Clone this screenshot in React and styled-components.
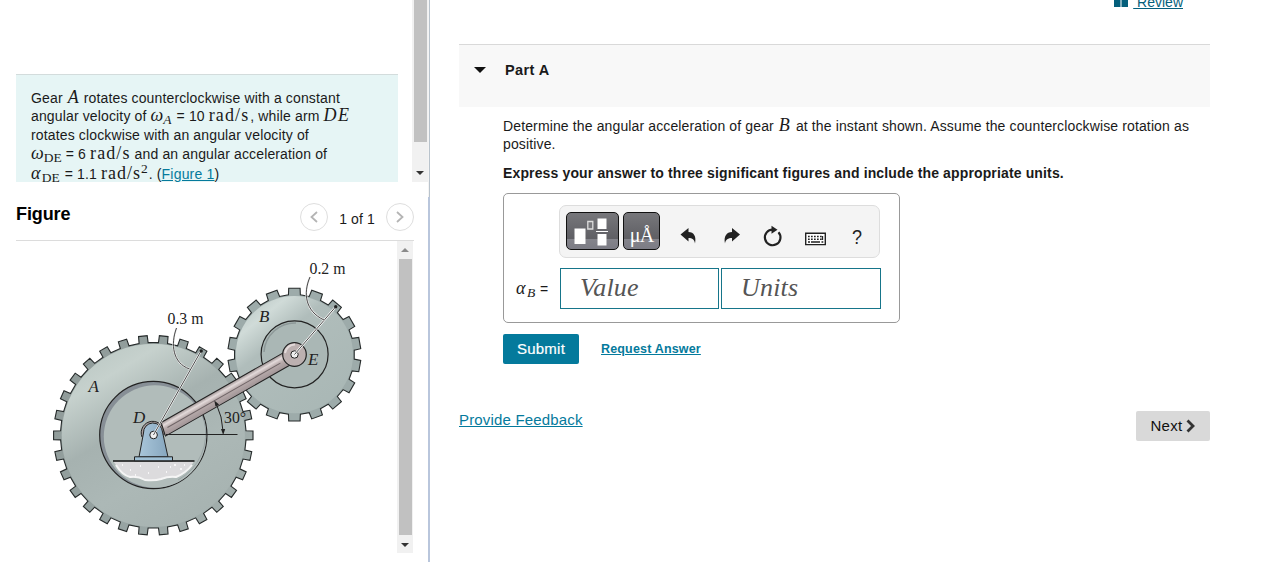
import React from 'react';
import styled, { createGlobalStyle } from 'styled-components';

const GlobalStyle = createGlobalStyle`
    * { box-sizing: border-box; }
    body {
        margin: 0;
        background: #fff;
        color: #1a1a1a;
        font-family: "Liberation Sans", Arial, sans-serif;
        font-size: 14px;
        overflow: hidden;
    }
`;

const Page = styled.div`
    display: flex;
    width: 1264px;
    height: 562px;
    overflow: hidden;
`;

const LeftPane = styled.div`
    display: flex;
    flex-direction: column;
    width: 428px;
    flex: none;
`;

const Divider = styled.div`
    display: flex;
    flex-direction: column;
    width: 2px;
    flex: none;
    background: #b9c6dc;
    &::before {
        content: '';
        height: 197px;
        border-left: 1px solid #f4f4f4;
        background: #b9c3cc;
    }
`;

const Top = styled.div`
    display: flex;
    justify-content: space-between;
    height: 182px;
    padding-left: 16px;
`;

const Problem = styled.div`
    width: 382px;
    height: 108px;
    margin-top: 74px;
    padding: 14px 0 0 15px;
    border-top: 1px solid #d3dcdc;
    background: #e6f5f5;
    overflow: hidden;
`;

const Line = styled.div`
    height: ${props => props.h || 18}px;
    line-height: ${props => props.h || 18}px;
    letter-spacing: ${props => props.ls || 0.14}px;
    font-weight: ${props => (props.bold ? 700 : 400)};
    white-space: pre;
`;

const Maths = styled.span`
    margin: 0 ${props => (props.gap === undefined ? 1 : props.gap)}px 0 ${props => props.lead || 0}px;
    font-family: "Liberation Serif", "Times New Roman", serif;
    font-size: ${props => props.size || 18}px;
    font-style: ${props => (props.upright ? 'normal' : 'italic')};
    letter-spacing: ${props => props.ls || 0}px;
    line-height: 1px;
    sub, sup {
        font-size: 13.5px;
        line-height: 1px;
        letter-spacing: 0;
    }
    sub { vertical-align: -3px; }
    sup { vertical-align: 6px; }
    b { font-weight: 400; font-style: normal; }
`;

const Link = styled.a`
    color: #047a9c;
    font-size: ${props => props.size || 14}px;
    font-weight: ${props => (props.bold ? 700 : 400)};
    letter-spacing: ${props => props.ls || 0}px;
    text-decoration: underline;
    white-space: pre;
`;

const ScrollTrack = styled.div`
    display: flex;
    flex-direction: column;
    align-items: center;
    justify-content: space-between;
    width: 16px;
    background: #f1f1f1;
`;

const Thumb = styled.div`
    width: 13px;
    height: ${props => props.h}px;
    background: #c1c1c1;
`;

const ScrollArrow = styled.div`
    display: flex;
    align-items: center;
    justify-content: center;
    height: ${props => props.h}px;
    &::before {
        content: '';
        border: 4px solid transparent;
        border-${props => (props.up ? 'top' : 'bottom')}-width: 0;
        border-${props => (props.up ? 'bottom' : 'top')}-color: ${props => (props.up ? '#8b8b8b' : '#333')};
    }
`;

const FigureHead = styled.div`
    display: flex;
    align-items: center;
    height: 59px;
    width: 398px;
    margin-left: 16px;
    border-bottom: 1px solid #dcdcdc;
`;

const FigureTitle = styled.h2`
    flex: 1;
    margin: 0;
    padding-top: 5px;
    font-size: 18px;
    line-height: 20px;
    letter-spacing: -0.1px;
    color: #000;
`;

const Pager = styled.div`
    display: flex;
    align-items: center;
    padding-top: 12px;
    font-size: 14px;
`;

const Count = styled.span`
    width: 58px;
    text-align: center;
    padding-top: 3px;
    letter-spacing: 0.1px;
`;

const RoundButton = styled.button`
    display: flex;
    align-items: center;
    justify-content: center;
    width: 28px;
    height: 28px;
    padding: 0;
    border: 1px solid #dedede;
    border-radius: 50%;
    background: #fff;
`;

const FigureBody = styled.div`
    display: flex;
    height: 312px;
    width: 398px;
    margin-left: 16px;
    svg { display: block; }
`;

const RightPane = styled.div`
    display: flex;
    flex-direction: column;
    width: 751px;
    margin-left: 29px;
`;

const Review = styled.div`
    display: flex;
    justify-content: flex-end;
    height: 44px;
    padding-right: 27px;
    color: #045f7b;
    svg { margin-top: -5px; margin-right: 5px; }
    a { margin-top: -6px; height: 16px; line-height: 16px; color: #045f7b; }
`;

const PartHeader = styled.div`
    display: flex;
    align-items: center;
    height: 63px;
    padding: 0 0 12px 15px;
    border-top: 1px solid #d9d9d9;
    background: #f8f8f8;
    font-size: 14.5px;
    font-weight: 700;
    letter-spacing: 0.4px;
`;

const Caret = styled.span`
    margin-right: 19px;
    border: 6px solid transparent;
    border-top-color: #111;
    border-bottom-width: 0;
`;

const PartBody = styled.div`
    padding: 10px 0 0 44px;
`;

const AnswerBox = styled.div`
    width: 397px;
    height: 130px;
    padding: 11px 0 0 12px;
    border: 1px solid #999;
    border-radius: 5px;
`;

const Toolbar = styled.div`
    display: flex;
    align-items: center;
    width: 321px;
    height: 53px;
    margin-left: 43px;
    padding-left: 6px;
    border: 1px solid #ddd;
    border-radius: 7px;
    background: #f4f4f4;
`;

const DarkButton = styled.button`
    width: ${props => props.w}px;
    height: 38px;
    margin: 0 4px 2px 0;
    padding: 0;
    border: 1px solid #111;
    border-radius: 5px;
    background: linear-gradient(#77777b 0, #5f5f64 72%, #84848b 73%, #7c7c85 100%);
    color: #fff;
    font: 20px/45px "Liberation Serif", serif;
    letter-spacing: -0.8px;
    overflow: hidden;
    svg { display: block; }
`;

const Tools = styled.div`
    display: flex;
    align-items: center;
    padding-top: 10px;
    svg { display: block; }
`;

const AnswerRow = styled.div`
    display: flex;
    align-items: center;
    height: 41px;
    margin-top: 10px;
`;

const AnswerLabel = styled.div`
    width: 44px;
    padding-top: 1px;
    white-space: pre;
`;

const Field = styled.div`
    width: ${props => props.w}px;
    height: 41px;
    margin-right: 2px;
    padding-left: 19px;
    border: 1px solid #16758a;
    background: #fff;
    color: #555;
    font: italic 26px/38px "Liberation Serif", "Times New Roman", serif;
    letter-spacing: 0.2px;
`;

const Actions = styled.div`
    display: flex;
    align-items: center;
    gap: 22px;
    margin-top: 11px;
`;

const Submit = styled.button`
    width: 76px;
    height: 30px;
    padding: 0;
    border: 0;
    border-radius: 2px;
    background: #047a9c;
    color: #fff;
    font: 15px/28px "Liberation Sans", Arial, sans-serif;
    letter-spacing: 0.25px;
    -webkit-text-stroke: 0.2px #fff;
`;

const Footer = styled.div`
    display: flex;
    align-items: flex-start;
    justify-content: space-between;
    margin-top: 47px;
`;

const NextButton = styled.button`
    display: flex;
    align-items: center;
    justify-content: center;
    gap: 3px;
    width: 74px;
    height: 30px;
    padding: 0 0 1px;
    border: 0;
    border-radius: 2px;
    background: #d9d9d9;
    color: #111;
    font: 15px "Liberation Sans", Arial, sans-serif;
    letter-spacing: 0.3px;
`;

// outline of a gear with n square teeth, first tooth at angle `start`
function gearPath(cx, cy, outer, root, n, start, halfTip, halfRoot) {
    const pt = (r, deg) => {
        const a = (deg * Math.PI) / 180;
        return `${(cx + r * Math.cos(a)).toFixed(2)} ${(cy + r * Math.sin(a)).toFixed(2)}`;
    };
    const parts = [];
    for (let i = 0; i < n; i++) {
        const a = start + (360 / n) * i;
        parts.push(pt(root, a - halfRoot), pt(outer, a - halfTip), pt(outer, a + halfTip), pt(root, a + halfRoot));
    }
    return `M${parts.join('L')}Z`;
}

function GearFigure() {
    return (
        <svg width="381" height="312" viewBox="16 241 381 312" fontFamily="Liberation Serif, serif" fill="#222">
            <defs>
                <linearGradient id="ga" x1="0" y1="0.1" x2="1" y2="0.7">
                    <stop offset="0" stopColor="#8f9a98" />
                    <stop offset="0.6" stopColor="#96a3a2" />
                    <stop offset="1" stopColor="#a3afad" />
                </linearGradient>
                <linearGradient id="gaFace" x1="0.1" y1="0" x2="0.7" y2="1">
                    <stop offset="0" stopColor="#b8c5c1" />
                    <stop offset="0.2" stopColor="#c6d1cd" />
                    <stop offset="0.45" stopColor="#a6b2b0" />
                    <stop offset="0.7" stopColor="#acb8b6" />
                    <stop offset="1" stopColor="#a7b3b1" />
                </linearGradient>
                <linearGradient id="gb" x1="0" y1="0" x2="0.8" y2="1">
                    <stop offset="0" stopColor="#b0bdbb" />
                    <stop offset="0.22" stopColor="#d0dbd8" />
                    <stop offset="0.4" stopColor="#b0bdbb" />
                    <stop offset="1" stopColor="#a9b7b5" />
                </linearGradient>
                <linearGradient id="arm" x1="0" y1="0" x2="0" y2="1">
                    <stop offset="0" stopColor="#9d9292" />
                    <stop offset="0.25" stopColor="#e3dada" />
                    <stop offset="0.5" stopColor="#b9acac" />
                    <stop offset="1" stopColor="#a09496" />
                </linearGradient>
                <linearGradient id="post" x1="0" y1="0" x2="1" y2="0">
                    <stop offset="0" stopColor="#a9c6da" />
                    <stop offset="1" stopColor="#86a6be" />
                </linearGradient>
            </defs>

            <path d={gearPath(153.3, 435.3, 99.8, 92.8, 30, 0, 2.5, 2.8)} fill="url(#ga)" stroke="#262b2b" strokeWidth="1.1" />
            <circle cx="153.3" cy="435.3" r="91.6" fill="url(#gaFace)" />
            <circle cx="153.3" cy="435" r="53.6" fill="#878f96" stroke="#222" strokeWidth="1.2" />
            <circle cx="155" cy="436.5" r="51.2" fill="#b1bcba" />
            <path d="M204 420a53 53 0 0 1-26 60" fill="none" stroke="#9aa5a5" strokeWidth="1" />

            <path d={gearPath(294.4, 354.6, 66.6, 60, 18, 10, 4.9, 5.7)} fill="#9dabaa" stroke="#262b2b" strokeWidth="1.1" />
            <circle cx="294.4" cy="354.6" r="58.6" fill="url(#gb)" />
            <circle cx="294.6" cy="354.3" r="33.5" fill="#aab7b5" stroke="#222" strokeWidth="1.2" />
            <path d="M264 352a31 31 0 0 1 32-29" fill="none" stroke="#8d9898" strokeWidth="1.5" />

            <path d="M113.500 461.500h80.500q-7 12-17 16q-9-1-14 1.500q-10 3-18 1q-7-4-14-2q-11-5-17.500-16.500z" fill="#dcdbdd" />
            <path d="M116 465q6 10 14 12q8-1 15 3q10 1 16-1q8-3 15-2q10-4 16-12" fill="none" stroke="#f5f5f5" strokeWidth="2" />
            <path d="M122 465h1M130 470h1M140 466h1M148 473h1M158 467h1M166 472h1M174 465h2M180 469h2M170 467h1M135 475h1M184 465h1" stroke="#fff" strokeWidth="1.5" />
            <path d="M113 461h81.500" stroke="#111" strokeWidth="1.3" />
            <path d="M142 437a11.500 11.500 0 1 1 22-2" fill="#a99f9f" stroke="#222" strokeWidth="1" />
            <g transform="translate(153.300 435) rotate(-29.700)">
                <path d="M13-7H153V7H10z" fill="url(#arm)" stroke="#222" strokeWidth="1" />
                <path d="M16 0.500H146" stroke="#6d6365" strokeWidth="0.900" />
            </g>
            <path d="M139 457l4.500-24a9.500 9.500 0 0 1 19-1l5.500 25z" fill="url(#post)" stroke="#222" strokeWidth="1" />
            <path d="M134.500 456.800h38v4h-38z" fill="#9fc0d6" stroke="#222" strokeWidth="1" />
            <circle cx="153.600" cy="435" r="3.800" fill="#eee" stroke="#222" />

            <circle cx="294.500" cy="354.500" r="11.800" fill="#bcb0b0" stroke="#222" strokeWidth="1.200" />
            <path d="M285 353a10 10 0 0 1 10-8.500" fill="none" stroke="#e3dada" strokeWidth="2" />
            <circle cx="294.500" cy="354.500" r="3.700" fill="#eee" stroke="#222" />

            <path d="M294.500 354.500L335.500 307M153.500 435L201 351" stroke="#fff" strokeWidth="2" />
            <path d="M294.500 354.500L335.500 307M153.500 435L201 351" stroke="#333" strokeWidth="0.900" />
            <path d="M310 277c-7 16-5 34 14 43M176.500 328c-6 16-4 35 13 41" fill="none" stroke="#eee" strokeWidth="2" />
            <path d="M310 277c-7 16-5 34 14 43M176.500 328c-6 16-4 35 13 41" fill="none" stroke="#333" strokeWidth="0.900" />
            <circle cx="335.700" cy="306.800" r="1.700" />
            <circle cx="201.200" cy="351" r="1.700" />

            <path d="M166 434.500h71.500M216 403q6.500 14 7 28" fill="none" stroke="#222" strokeWidth="1" />
            <path d="M214.300 400.500l1.200 6 3.600-2zM223.200 435l-2.200-6h4.200z" />

            <text x="167.500" y="324" fontSize="15.800">0.3 m</text>
            <text x="309.500" y="273.500" fontSize="15.800">0.2 m</text>
            <text x="224" y="423" fontSize="15.800">30°</text>
            <g fontSize="17" fontStyle="italic">
                <text x="88.500" y="391.500">A</text>
                <text x="133" y="422.500">D</text>
                <text x="259" y="322">B</text>
                <text x="308" y="364.500">E</text>
            </g>
        </svg>
    );
}

function Chevron({ flip }) {
    return (
        <svg width="10" height="14" viewBox="0 0 10 14" fill="none" stroke="#b4b4b4" strokeWidth="1.8">
            <path d={flip ? 'M2 2l5.500 5L2 12' : 'M8 2L2.500 7 8 12'} />
        </svg>
    );
}

function TemplateIcon() {
    return (
        <svg width="51" height="36" viewBox="0 0 51 36">
            <path d="M7.500 15.500h11v15.500h-11zM30.500 5.500h9v10.500h-9zM30.500 21h9v11.500h-9z" fill="#fff" />
            <path d="M29 18.500h12" stroke="#fff" strokeWidth="1" />
            <path d="M20.800 8.500h5v7.500h-5z" fill="#77777b" stroke="#ddd" strokeWidth="1.300" />
        </svg>
    );
}

function ToolIcons() {
    return (
        <svg width="200" height="36" viewBox="664 219 200 36" fill="#222">
            <path d="M680.500 234.500L688.500 228v4c5.500 0 8 4.500 6.500 11.500-.6-4-2.700-5.500-6.500-5.500v3.500z" />
            <path d="M740 234.500L732 228v4c-5.500 0-8.500 4.500-7 11.500.6-4 3.200-5.500 7-5.500v3.500z" />
            <path d="M778.500 232.200a7.800 7.800 0 1 1-5.500-2.600" fill="none" stroke="#222" strokeWidth="2.200" />
            <path d="M771.500 225.800l6 4-6 4z" />
            <path d="M805.700 233.200h19.600v11.400h-19.600z" fill="#fff" stroke="#222" strokeWidth="1.400" />
            <path d="M808 236.500h15M808 239.300h15" stroke="#222" strokeWidth="1.600" strokeDasharray="1.700 1.300" />
            <path d="M808 242h2M811 242h9M821.500 242h1.800M822.500 236v4" stroke="#222" strokeWidth="1.300" />
            <text x="852" y="244" fontFamily="Liberation Sans, Arial, sans-serif" fontSize="20" textLength="10" lengthAdjust="spacingAndGlyphs">?</text>
        </svg>
    );
}

export default function App() {
    return (
        <Page>
            <GlobalStyle />
            <LeftPane>
                <Top>
                    <Problem>
                        <Line>Gear <Maths lead={1}>A</Maths> rotates counterclockwise with a constant</Line>
                        <Line h={19}>angular velocity of <Maths>ω<sub>A</sub></Maths> = 10 <Maths upright ls={1.1}>rad/s</Maths>, while arm <Maths ls={1.4}>DE</Maths></Line>
                        <Line>rotates clockwise with an angular velocity of</Line>
                        <Line h={20}><Maths gap={0}>ω<sub><b>DE</b></sub></Maths> = 6 <Maths upright gap={0} ls={1.1}>rad/s</Maths> and an angular acceleration of</Line>
                        <Line h={21}><Maths ls={1.2}>α<sub><b>DE</b></sub></Maths> = 1.1 <Maths upright ls={1}>rad/s<sup>2</sup></Maths>. (<Link ls={0.2}>Figure 1</Link>)</Line>
                    </Problem>
                    <ScrollTrack>
                        <Thumb h={142} />
                        <ScrollArrow h={18} />
                    </ScrollTrack>
                </Top>
                <FigureHead>
                    <FigureTitle>Figure</FigureTitle>
                    <Pager>
                        <RoundButton><Chevron /></RoundButton>
                        <Count>1 of 1</Count>
                        <RoundButton><Chevron flip /></RoundButton>
                    </Pager>
                </FigureHead>
                <FigureBody>
                    <GearFigure />
                    <ScrollTrack>
                        <ScrollArrow up h={17} />
                        <Thumb h={276} />
                        <ScrollArrow h={17} />
                    </ScrollTrack>
                </FigureBody>
            </LeftPane>
            <Divider />
            <RightPane>
                <Review>
                    <svg width="14" height="12" viewBox="0 0 14 12" fill="currentColor">
                        <path d="M0 0h6.500v12H0zM7.500 0H14v12H7.500z" />
                    </svg>
                    <Link> Review</Link>
                </Review>
                <PartHeader><Caret />Part A</PartHeader>
                <PartBody>
                    <Line ls={0.13}>Determine the angular acceleration of gear <Maths lead={1} gap={2}>B</Maths> at the instant shown. Assume the counterclockwise rotation as</Line>
                    <Line>positive.</Line>
                    <Line h={40} bold>Express your answer to three significant figures and include the appropriate units.</Line>
                    <AnswerBox>
                        <Toolbar>
                            <DarkButton w={53}><TemplateIcon /></DarkButton>
                            <DarkButton w={37}>μÅ</DarkButton>
                            <Tools><ToolIcons /></Tools>
                        </Toolbar>
                        <AnswerRow>
                            <AnswerLabel><Maths ls={1.5}>α<sub>B</sub></Maths> =</AnswerLabel>
                            <Field w={159}>Value</Field>
                            <Field w={160}>Units</Field>
                        </AnswerRow>
                    </AnswerBox>
                    <Actions>
                        <Submit>Submit</Submit>
                        <Link bold size={12.5} ls={0.17}>Request Answer</Link>
                    </Actions>
                </PartBody>
                <Footer>
                    <Link size={15} ls={0.17}>Provide Feedback</Link>
                    <NextButton>
                        Next
                        <svg width="10" height="14" viewBox="0 0 10 14" fill="none" stroke="#333" strokeWidth="2.800"><path d="M1.500 1.500L7 7 1.500 12.500" /></svg>
                    </NextButton>
                </Footer>
            </RightPane>
        </Page>
    );
}
